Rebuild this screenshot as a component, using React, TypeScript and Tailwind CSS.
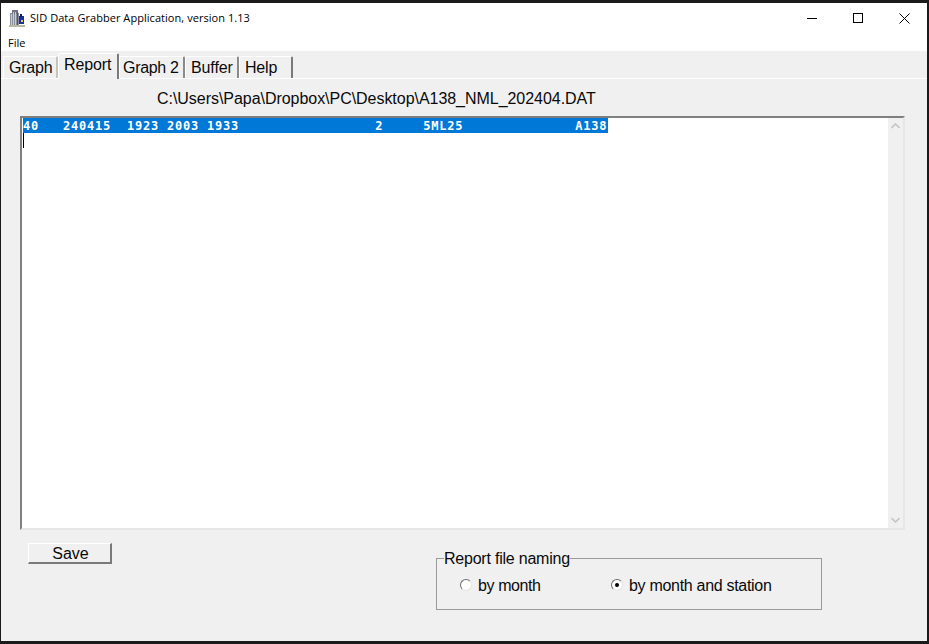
import React from 'react';

const tabs = [
  { label: 'Graph', w: 'w-[55px]', pad: 'pl-[5px]', track: 'tracking-[-0.2px]', edge: 'border-r-[#c4c4c4]' },
  { label: 'Report', w: 'w-[61px]', pad: 'pl-[5px]', track: 'tracking-[-0.1px]', edge: 'border-r-[#7a7a7a]', active: true },
  { label: 'Graph 2', w: 'w-[66px]', pad: 'pl-[3px]', track: 'tracking-[-0.3px]', edge: 'border-r-[#8a8a8a]' },
  { label: 'Buffer', w: 'w-[54px]', pad: 'pl-[5px]', track: 'tracking-[-0.1px]', edge: 'border-r-[#8a8a8a]' },
  { label: 'Help', w: 'w-[54px]', pad: 'pl-[5px]', track: 'tracking-[-0.2px]', edge: 'border-r-[#7a7a7a]' },
];

const reportLine =
  '40   240415  1923 2003 1933                 2     5ML25              A138';

function AppIcon() {
  return (
    <svg width="16" height="17" viewBox="0 0 16 17" shapeRendering="crispEdges">
      <rect x="1" y="3" width="9" height="13" fill="#8a8f9c" />
      <rect x="3" y="0" width="6" height="4" fill="#6f7480" />
      <rect x="2" y="4" width="1" height="11" fill="#c9ccd4" />
      <rect x="4" y="2" width="1" height="13" fill="#c9ccd4" />
      <rect x="6" y="2" width="1" height="13" fill="#c9ccd4" />
      <rect x="8" y="2" width="1" height="13" fill="#50545e" />
      <rect x="10" y="6" width="5" height="8" fill="#1c2f9c" />
      <rect x="11" y="4" width="2" height="3" fill="#101a66" />
      <rect x="12" y="10" width="2" height="2" fill="#e8d24a" />
      <rect x="0" y="15" width="16" height="2" fill="#b8b8a4" />
    </svg>
  );
}

function Radio({ checked }: { checked?: boolean }) {
  return (
    <span className="w-[12px] h-[12px] rounded-full bg-white border border-t-[#6e6e6e] border-l-[#6e6e6e] border-r-[#e4e4e4] border-b-[#e4e4e4] flex items-center justify-center">
      {checked && <span className="w-[4px] h-[4px] rounded-full bg-black" />}
    </span>
  );
}

export default function App() {
  return (
    <div className="w-[929px] h-[644px] bg-[#1b1b1b] pt-[3px] pl-[1px] pr-[2px] pb-[3px] overflow-hidden font-['Liberation_Sans',sans-serif] text-[#0a0a0a]">
      <div className="h-full flex flex-col bg-[#f0f0f0]">
        {/* Title bar */}
        <div className="h-[30px] bg-white flex items-center shrink-0">
          <div className="ml-[8px] mr-[5px] flex"><AppIcon /></div>
          <span className="text-[11px] font-['Open_Sans',sans-serif] tracking-[0.05px] text-black">
            SID Data Grabber Application, version 1.13
          </span>
          <div className="ml-auto flex items-center text-black">
            <div className="w-[46px] h-[30px] flex items-center justify-center">
              <div className="w-[10px] h-px bg-black" />
            </div>
            <div className="w-[46px] h-[30px] flex items-center justify-center">
              <div className="w-[10px] h-[10px] border border-black" />
            </div>
            <div className="w-[46px] h-[30px] flex items-center justify-center">
              <svg width="11" height="11" viewBox="0 0 11 11">
                <path d="M0.5 0.5L10.5 10.5M10.5 0.5L0.5 10.5" stroke="#000" strokeWidth="1" fill="none" />
              </svg>
            </div>
          </div>
        </div>

        {/* Menu */}
        <div className="h-[18px] bg-white flex items-center pl-[7px] pt-[2px] text-[11px] font-['Open_Sans',sans-serif] text-black shrink-0">
          File
        </div>

        {/* Tabs */}
        <div className="h-[28px] flex items-end pl-[2px] shrink-0 border-b border-white">
          {tabs.map((t) => (
            <div
              key={t.label}
              className={
                t.active
                  ? `h-[26px] ${t.w} ${t.pad} ${t.track} ${t.edge} mb-[-1px] pb-[3px] relative bg-[#f0f0f0] border-t border-l border-white border-r-2 rounded-t-[2px] flex items-center text-[16px]`
                  : `h-[22px] ${t.w} ${t.pad} ${t.track} ${t.edge} bg-[#f0f0f0] border-t border-l border-white border-r-2 rounded-t-[2px] flex items-center text-[16px]`
              }
            >
              {t.label}
            </div>
          ))}
        </div>

        {/* Report panel */}
        <div className="flex-1 flex flex-col min-h-0">
          <div className="h-[37px] pl-[156px] pt-[10px] text-[16px] leading-[20px] tracking-[-0.04px] shrink-0">
            C:\Users\Papa\Dropbox\PC\Desktop\A138_NML_202404.DAT
          </div>

          <div className="ml-[19px] w-[885px] h-[414px] shrink-0 flex bg-white border-t-2 border-l-2 border-t-[#7f7f7f] border-l-[#7f7f7f] border-r-2 border-b-2 border-r-[#e6e6e6] border-b-[#e6e6e6]">
            <div className="flex-1 min-w-0 pl-[1px] relative">
              <div className="w-[585px] h-[15px] bg-[#0078d7] text-white font-['DejaVu_Sans_Mono',monospace] font-bold text-[12px] leading-[17px] tracking-[0.78px] whitespace-pre">
                {reportLine}
              </div>
              <div className="absolute left-[1px] top-[15px] w-px h-[15px] bg-black" />
            </div>
            <div className="w-[15px] bg-[#f0f0f0] flex flex-col justify-between items-center py-[5px] shrink-0">
              <svg width="9" height="6" viewBox="0 0 9 6">
                <path d="M0.5 5L4.5 1L8.5 5" stroke="#c4c4c4" strokeWidth="1.6" fill="none" />
              </svg>
              <svg width="9" height="6" viewBox="0 0 9 6">
                <path d="M0.5 1L4.5 5L8.5 1" stroke="#c4c4c4" strokeWidth="1.6" fill="none" />
              </svg>
            </div>
          </div>

          <div className="flex items-start">
            <button className="ml-[27px] mt-[13px] w-[84px] h-[21px] pt-[2px] pl-[2px] bg-[#f0f0f0] border-t border-l border-t-white border-l-white border-r-2 border-b-2 border-r-[#7a7a7a] border-b-[#7a7a7a] text-[16px] leading-[16px] flex items-center justify-center">
              Save
            </button>
            <fieldset className="ml-[324px] mt-[18px] w-[386px] h-[62px] border border-[#9a9a9a] pl-[7px] m-0">
              <legend className="text-[16px] leading-[18px] pt-[2px] p-0 tracking-[-0.22px]">Report file naming</legend>
              <div className="flex items-center text-[16px] leading-[18px] pt-[7px] pl-[16px]">
                <Radio />
                <span className="ml-[6px] pt-[2px] w-[133px] tracking-[-0.4px]">by month</span>
                <Radio checked />
                <span className="ml-[6px] pt-[2px] tracking-[-0.3px]">by month and station</span>
              </div>
            </fieldset>
          </div>
        </div>
      </div>
    </div>
  );
}
